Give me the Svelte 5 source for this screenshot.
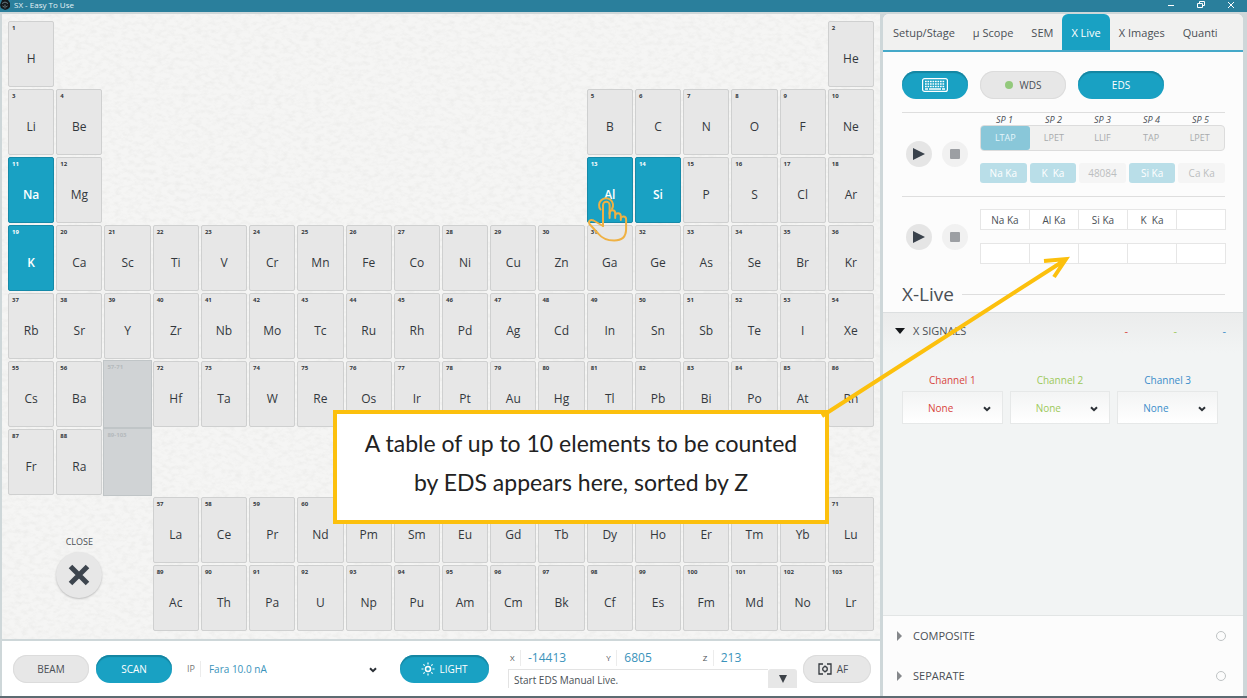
<script>
    // Rows of the periodic table, "." leaves a column empty, "*" is a placeholder
    const layout = [
        { z: [1, 2], cells: "H . . . . . . . . . . . . . . . . He" },
        { z: [3, 5], cells: "Li Be . . . . . . . . . . B C N O F Ne" },
        { z: [11, 13], cells: "Na Mg . . . . . . . . . . Al Si P S Cl Ar" },
        { z: [19], cells: "K Ca Sc Ti V Cr Mn Fe Co Ni Cu Zn Ga Ge As Se Br Kr" },
        { z: [37], cells: "Rb Sr Y Zr Nb Mo Tc Ru Rh Pd Ag Cd In Sn Sb Te I Xe" },
        { z: [55], cells: "Cs Ba * Hf Ta W Re Os Ir Pt Au Hg Tl Pb Bi Po At Rn" },
        { z: [87], cells: "Fr Ra * . . . . . . . . . . . . . . ." },
        { z: [57], cells: ". . . La Ce Pr Nd Pm Sm Eu Gd Tb Dy Ho Er Tm Yb Lu" },
        { z: [89], cells: ". . . Ac Th Pa U Np Pu Am Cm Bk Cf Es Fm Md No Lr" }
    ];

    const placeholders = { 6: "57-71", 7: "89-103" };

    const elements = [];
    layout.forEach((row, r) => {
        let z = row.z[0];
        row.cells.split(" ").forEach((symbol, c) => {
            if (symbol === ".") return;
            if (symbol === "*") {
                elements.push({ symbol: "", z: placeholders[r + 1], row: r + 1, col: c + 1, off: true });
                z = 72;
                return;
            }
            elements.push({ symbol, z, row: r + 1, col: c + 1 });
            z++;
        });
    });

    let selected = $state(["Na", "K", "Al", "Si"]);

    const toggle = (el) => {
        if (el.off) return;
        selected = selected.includes(el.symbol)
            ? selected.filter((s) => s !== el.symbol)
            : [...selected, el.symbol];
    };

    const tabs = ["Setup/Stage", "µ Scope", "SEM", "X Live", "X Images", "Quanti"];
    let activeTab = $state("X Live");

    const crystals = ["LTAP", "LPET", "LLIF", "TAP", "LPET"];
    const lines = [
        { label: "Na Ka", on: true },
        { label: "K  Ka", on: true },
        { label: "48084", on: false },
        { label: "Si Ka", on: true },
        { label: "Ca Ka", on: false }
    ];
    const edsSlots = ["Na Ka", "Al Ka", "Si Ka", "K  Ka", "", "", "", "", "", ""];

    const channels = [
        { id: "ch1", label: "Channel 1", color: "red" },
        { id: "ch2", label: "Channel 2", color: "green" },
        { id: "ch3", label: "Channel 3", color: "blue" }
    ];

    const position = [
        { axis: "X", value: "-14413" },
        { axis: "Y", value: "6805" },
        { axis: "Z", value: "213" }
    ];
</script>

{#snippet chevron()}
    <svg class="chevron" width="8" height="6" viewBox="0 0 8 6"><path d="M1 1.2 4 4.2 7 1.2" fill="none" stroke="#2b3036" stroke-width="2" /></svg>
{/snippet}

{#snippet transport(name)}
    <div class="transport">
        <button class="round play" aria-label="Start {name}">
            <svg width="12" height="12" viewBox="0 0 12 12"><path d="M0 0 12 6 0 12z" fill="#3a424c" /></svg>
        </button>
        <button class="round stop" aria-label="Stop {name}">
            <svg width="10" height="10" viewBox="0 0 10 10"><rect width="10" height="10" rx="1" fill="#9c9fa3" /></svg>
        </button>
    </div>
{/snippet}

<div class="window">
    <header class="titlebar">
        <svg class="app-icon" width="10" height="10" viewBox="0 0 10 10">
            <path d="M2 0h6l2 3v4L8 9 5 10 1 8 0 5z" fill="#14181c" />
            <path d="M2 3.500 5 2l3 1.500M5 4.500v4M2.500 6l1.500 1M7.500 6 6 7" fill="none" stroke="#8fa3ad" stroke-width=".7" />
        </svg>
        <span class="title">SX - Easy To Use</span>
        <div class="window-buttons">
            <button aria-label="Minimize"><svg width="8" height="8" viewBox="0 0 8 8"><path d="M1 4.500h6" /></svg></button>
            <button aria-label="Restore"><svg width="8" height="8" viewBox="0 0 8 8"><path d="M.5 2.500h5v4h-5zM2.500 2.500v-2h5v4h-2" /></svg></button>
            <button aria-label="Close window"><svg width="8" height="8" viewBox="0 0 8 8"><path d="M1 1l6 6M7 1 1 7" /></svg></button>
        </div>
    </header>

    <div class="content">
        <main>
            <section class="board">
                <svg class="texture" aria-hidden="true">
                    <filter id="fur" x="0" y="0" width="100%" height="100%">
                        <feTurbulence type="fractalNoise" baseFrequency="0.15 0.25" numOctaves="3" seed="7" />
                        <feColorMatrix values="0 0 0 0 .6  0 0 0 0 .6  0 0 0 0 .58  1.6 0 0 0 -.65" />
                    </filter>
                    <rect width="100%" height="100%" filter="url(#fur)" />
                </svg>

                <div class="table">
                    {#each elements as el}
                        <button
                            class="element"
                            class:on={selected.includes(el.symbol)}
                            class:off={el.off}
                            style:grid-row={el.row}
                            style:grid-column={el.col}
                            disabled={el.off}
                            onclick={() => toggle(el)}
                        >
                            <span class="number">{el.z}</span>
                            <span class="symbol">{el.symbol}</span>
                        </button>
                    {/each}
                    <div class="close">
                        <label for="close">CLOSE</label>
                        <button id="close">
                            <svg width="22" height="22" viewBox="0 0 22 22"><path d="M2.500 2.500l17 17M19.500 2.500l-17 17" stroke="#3d454e" stroke-width="5" /></svg>
                        </button>
                    </div>
                    <svg class="hand" width="42" height="48" viewBox="0 0 42 48">
                        <g fill="none" stroke="#efb143" stroke-width="2" stroke-linecap="round" stroke-linejoin="round">
                            <path d="M16 31V10a3.300 3.300 0 0 1 6.600 0v13" />
                            <path d="M22.600 19v-1a2.800 2.800 0 0 1 5.600 0v5M28.200 21a2.800 2.800 0 0 1 5.600 0v4M33.800 23.500a2.700 2.700 0 0 1 5.300 .5v10c0 8-5 11.500-12 11.500-8 0-12-2-16-7L2.500 29c-1.500-3 1-5 4-3.500l9.500 5.500" />
                            <path d="M13.500 14.500a7 7 0 1 1 11.500-.5" />
                        </g>
                    </svg>
                </div>
            </section>

            <footer>
                <button class="pill beam">BEAM</button>
                <button class="pill primary scan">SCAN</button>
                <label class="ip" for="ip">IP</label>
                <div class="picker probe">
                    <select id="ip"><option>Fara 10.0 nA</option></select>
                    {@render chevron()}
                </div>
                <button class="pill primary light">
                    <svg width="14" height="14" viewBox="0 0 14 14" fill="none" stroke="#fff">
                        <circle cx="7" cy="7" r="2.500" stroke-width="1.500" />
                        <path d="M7 .5v2M7 11.500v2M.5 7h2M11.500 7h2M2.400 2.400l1.300 1.300M10.300 10.300l1.300 1.300M2.400 11.600l1.300-1.300M10.300 3.700l1.300-1.300" stroke-width="1.200" />
                    </svg>
                    LIGHT
                </button>
                <div class="stage">
                    <div class="position">
                        {#each position as p}
                            <div class="axis"><span>{p.axis}</span><output>{p.value}</output></div>
                        {/each}
                    </div>
                    <div class="status">
                        <input aria-label="Status" value="Start EDS Manual Live." readonly />
                        <button aria-label="Show history"><svg width="8" height="8" viewBox="0 0 8 8"><path d="M0 0h8L4 8z" fill="#3d4248" /></svg></button>
                    </div>
                </div>
                <button class="pill af">
                    <svg width="14" height="12" viewBox="0 0 14 12" fill="none" stroke="#33383e" stroke-width="1.300">
                        <path d="M5 1H1v10h4M9 1h4v10H9" />
                        <circle cx="7" cy="6" r="2.300" />
                        <path d="M7 2.500v1.200M7 8.300v1.200" />
                    </svg>
                    AF
                </button>
            </footer>
        </main>

        <aside>
            <nav>
                {#each tabs as tab}
                    <button class:active={tab === activeTab} onclick={() => (activeTab = tab)}>{tab}</button>
                {/each}
            </nav>

            <section class="controls">
                <div class="modes">
                    <button class="pill primary keyboard" aria-label="Periodic table">
                        <svg width="26" height="14" viewBox="0 0 26 14">
                            <rect x=".6" y=".6" width="24.800" height="12.800" rx="2" fill="none" stroke="#fff" stroke-width="1.200" />
                            <path d="M3 3.500h20M3 6h20M3 8.500h20" stroke="#fff" stroke-width="1.600" stroke-dasharray="1.700 .8" />
                            <path d="M3 11h3M7 11h12M20 11h3" stroke="#fff" stroke-width="1.400" />
                        </svg>
                    </button>
                    <button class="pill"><i class="led"></i>WDS</button>
                    <button class="pill primary">EDS</button>
                </div>

                <div class="spectro wds">
                    {@render transport("WDS")}
                    <div class="slots">
                        <div class="row names">
                            {#each crystals as _, i}<span>SP {i + 1}</span>{/each}
                        </div>
                        <div class="row crystals">
                            {#each crystals as crystal, i}<button class:current={i === 0}>{crystal}</button>{/each}
                        </div>
                        <div class="row lines">
                            {#each lines as line}<button class:lit={line.on}>{line.label}</button>{/each}
                        </div>
                    </div>
                </div>

                <div class="spectro eds">
                    {@render transport("EDS")}
                    <div class="row inputs">
                        {#each edsSlots as slot, i}<input aria-label="EDS element {i + 1}" value={slot} />{/each}
                    </div>
                </div>

                <h1>X-Live</h1>
            </section>

            <section class="signals">
                <button class="fold open">
                    <svg width="10" height="6" viewBox="0 0 10 6"><path d="M0 0h10L5 6z" fill="#15181b" /></svg>
                    <span>X SIGNALS</span>
                    <i class="red">-</i><i class="green">-</i><i class="blue">-</i>
                </button>
                <div class="channels">
                    {#each channels as ch}
                        <div class="channel {ch.color}">
                            <label for={ch.id}>{ch.label}</label>
                            <div class="picker">
                                <select id={ch.id}><option>None</option></select>
                                {@render chevron()}
                            </div>
                        </div>
                    {/each}
                </div>
            </section>

            <section class="folds">
                {#each ["COMPOSITE", "SEPARATE"] as name}
                    <div class="fold">
                        <svg width="5" height="10" viewBox="0 0 5 10"><path d="M0 0v10l5-5z" fill="#85888b" /></svg>
                        <label for={name}>{name}</label>
                        <input type="radio" name="view" id={name} />
                    </div>
                {/each}
            </section>
        </aside>
    </div>

    <div class="callout">
        A table of up to 10 elements to be counted<br />by EDS appears here, sorted by Z
    </div>
    <svg class="arrow" width="256" height="172" viewBox="0 0 256 172">
        <path d="M6 166 249 10M228 11l22-2L238 27" fill="none" stroke="#fcc00d" stroke-width="4" />
    </svg>
</div>

<style>
    :global(body) {
        background: #ced7d9;
    }

    .window {
        position: relative;
        display: flex;
        flex-direction: column;
        min-height: 100vh;
        box-sizing: border-box;
        border-bottom: 2px solid #5d6b72;
        font-family: "Open Sans", "Noto Sans", sans-serif;
        font-size: 11px;
        line-height: 16px;
        color: #4a4f55;
    }

    button,
    input,
    select {
        font: inherit;
        color: inherit;
        margin: 0;
        padding: 0;
        border: 0;
        border-radius: 0;
        box-sizing: border-box;
        min-width: 0;
    }

    .titlebar {
        display: flex;
        align-items: center;
        gap: 4px;
        height: 12px;
        background: #2a7f9c;
        color: #e4f1f5;
        font-size: 8px;
        line-height: 10px;
    }

    .app-icon {
        margin-bottom: 2px;
    }

    .title {
        flex: 1;
        padding-bottom: 2px;
    }

    .window-buttons {
        display: flex;
        gap: 22px;
        padding: 0 12px 3px 0;
    }

    .window-buttons button {
        display: flex;
        background: none;
    }

    .window-buttons path {
        fill: none;
        stroke: #fff;
    }

    .content {
        flex: 1;
        display: grid;
        grid-template-columns: minmax(0, 1fr) 360px;
        gap: 3px;
        padding: 2px 4px 0 2px;
    }

    main {
        display: flex;
        flex-direction: column;
        gap: 2px;
    }

    .board {
        position: relative;
        flex: 1;
        padding: 7px 6px;
        background: #f5f5f4;
    }

    .texture {
        position: absolute;
        inset: 0;
        width: 100%;
        height: 100%;
        opacity: .25;
    }

    .table {
        position: relative;
        display: grid;
        grid-template-columns: repeat(18, minmax(0, 1fr));
        grid-template-rows: repeat(9, 66px);
        gap: 2px;
    }

    .element {
        display: flex;
        flex-direction: column;
        padding: 1px 3px;
        background: #e7e7e7;
        border: 1px solid #cfd0d0;
        border-radius: 2px;
        color: #33383d;
    }

    .number {
        align-self: flex-start;
        font-size: 6px;
        font-weight: bold;
        line-height: 10px;
    }

    .symbol {
        align-self: center;
        padding-top: 18px;
        font-size: 12px;
        line-height: 16px;
    }

    .element.on {
        background: #19a1c3;
        border-color: #1589a8;
        color: #fff;
    }

    .element.on .symbol {
        font-weight: 600;
    }

    .element.off {
        margin: -1px;
        background: #d0d3d5;
        border-color: #c0c5c7;
        border-radius: 0;
        color: #b4b9bc;
    }

    .close {
        grid-area: 8 / 1 / 10 / 4;
        display: flex;
        flex-direction: column;
        align-items: center;
        justify-content: center;
        gap: 2px;
        padding-top: 4px;
        font-size: 9px;
    }

    .close button {
        display: grid;
        place-items: center;
        width: 46px;
        height: 46px;
        border-radius: 50%;
        background: #e7e7e7;
        box-shadow: 0 1px 2px #bbb;
    }

    .hand {
        position: absolute;
        left: 579px;
        top: 174px;
    }

    footer {
        display: flex;
        align-items: center;
        height: 55px;
        padding: 0 9px 0 11px;
        background: #fff;
        box-sizing: border-box;
    }

    .pill {
        display: flex;
        align-items: center;
        justify-content: center;
        width: 86px;
        height: 28px;
        border-radius: 14px;
        background: #e7e7e7;
        box-shadow: inset 0 0 0 1px #dcdcdc;
        font-size: 10px;
    }

    .primary {
        background: #19a1c3;
        box-shadow: inset 0 2px 1px #1585a1;
        color: #fff;
    }

    .beam,
    .scan {
        width: 76px;
        margin-right: 7px;
    }

    .ip {
        padding: 0 5px 0 8px;
        border-right: 1px solid #ececec;
        font-size: 9px;
        color: #777;
    }

    .picker {
        position: relative;
        display: flex;
    }

    .picker select {
        appearance: none;
        width: 100%;
        background: none;
    }

    .chevron {
        position: absolute;
        right: 11px;
        top: 50%;
        margin-top: -2px;
        pointer-events: none;
    }

    .probe {
        flex: 1;
        margin-right: 12px;
    }

    .probe select {
        height: 20px;
        padding-left: 8px;
        font-size: 10px;
        color: #3a93bb;
    }

    .light {
        gap: 4px;
        width: 89px;
        margin-right: 19px;
    }

    .stage {
        width: 289px;
        margin-right: 6px;
    }

    .position {
        display: grid;
        grid-template-columns: repeat(3, 1fr);
    }

    .axis {
        display: flex;
        align-items: center;
        height: 20px;
        padding-bottom: 2px;
        box-sizing: border-box;
    }

    .axis span {
        width: 8px;
        padding: 0 2px;
        font-size: 8px;
        border-right: 1px solid #ececec;
    }

    .axis output {
        padding-left: 7px;
        font-size: 12px;
        color: #3a93bb;
    }

    .status {
        display: flex;
        height: 19px;
    }

    .status input {
        flex: 1;
        padding: 1px 0 0 5px;
        border-top: 1px solid #e3e3e3;
        border-left: 1px solid #e3e3e3;
        font-size: 10px;
    }

    .status button {
        display: grid;
        place-items: center;
        width: 29px;
        background: #e7e7e7;
        border-radius: 3px 3px 0 0;
    }

    .af {
        gap: 5px;
        width: 68px;
        padding-right: 8px;
    }

    aside {
        display: flex;
        flex-direction: column;
        border-radius: 6px 6px 0 0;
        background: #fcfcfc;
        overflow: hidden;
    }

    nav {
        display: flex;
        height: 38px;
        box-sizing: border-box;
        padding-left: 1px;
        background: #f1f1f0;
        border-bottom: 2px solid #45a9c9;
    }

    nav button {
        padding: 2px 9px 0;
        background: none;
        white-space: nowrap;
    }

    nav .active {
        border-radius: 6px 6px 0 0;
        background: #19a1c3;
        color: #fff;
    }

    .controls {
        padding: 19px 18px 5px 19px;
    }

    .modes {
        display: flex;
        gap: 12px;
        padding-bottom: 13px;
    }

    .keyboard {
        width: 66px;
    }

    .led {
        width: 8px;
        height: 8px;
        margin-right: 7px;
        border-radius: 50%;
        background: #93c97c;
    }

    .spectro {
        display: grid;
        grid-template-columns: 66px minmax(0, 1fr);
        align-items: center;
        column-gap: 12px;
        border-top: 1px solid #dedede;
    }

    .wds {
        padding: 2px 0 13px;
    }

    .eds {
        padding: 12px 0 17px;
    }

    .transport {
        display: flex;
        justify-content: space-between;
        padding-left: 4px;
    }

    .wds .transport {
        padding-top: 10px;
    }

    .round {
        display: grid;
        place-items: center;
        width: 26px;
        height: 26px;
        border-radius: 50%;
        background: #e5e5e5;
    }

    .stop {
        background: #f1f1f1;
    }

    .row {
        display: grid;
        grid-template-columns: repeat(5, minmax(0, 1fr));
    }

    .names {
        font-size: 9px;
        font-style: italic;
        line-height: 10px;
        text-align: center;
    }

    .crystals {
        height: 26px;
        box-sizing: border-box;
        border: 1px solid #dcdcdc;
        border-radius: 4px;
        background: #f1f1f0;
        font-size: 9px;
        color: #a8abad;
    }

    .crystals button {
        background: none;
    }

    .crystals .current {
        border-radius: 3px;
        background: #89c7d9;
        color: #e4f5fa;
    }

    .lines {
        gap: 3px;
        padding-top: 12px;
        font-size: 10px;
        color: #bcbec0;
    }

    .lines button {
        height: 20px;
        border-radius: 3px;
        background: #f5f5f5;
        white-space: pre;
    }

    .lines .lit {
        background: #b9dee8;
        color: #fff;
    }

    .inputs {
        row-gap: 13px;
    }

    .inputs input {
        height: 21px;
        margin-right: -1px;
        border: 1px solid #e6e6e6;
        background: #fff;
        font-size: 10px;
        text-align: center;
    }

    h1 {
        display: flex;
        align-items: center;
        gap: 8px;
        margin: 0;
        font-size: 19px;
        font-weight: normal;
        line-height: 26px;
    }

    h1::after {
        content: "";
        flex: 1;
        height: 1px;
        background: #dedede;
    }

    .signals {
        flex: 1;
        border-top: 1px solid #dcdfe0;
        border-bottom: 1px solid #e2e5e5;
        background: linear-gradient(#ebecec, #f2f4f4 40px);
    }

    .fold {
        display: flex;
        align-items: center;
        width: 100%;
        height: 40px;
        box-sizing: border-box;
        padding: 0 17px 0 14px;
        background: none;
        text-align: left;
    }

    .fold span,
    .fold label {
        flex: 1;
        padding-left: 11px;
    }

    .open {
        height: 36px;
        padding-left: 12px;
    }

    .open span {
        padding-left: 8px;
    }

    .open i {
        width: 49px;
        text-align: right;
        font-style: normal;
    }

    .channels {
        display: grid;
        grid-template-columns: repeat(3, minmax(0, 1fr));
        gap: 7px;
        padding: 23px 25px 0 19px;
    }

    .channel label {
        display: block;
        padding-bottom: 3px;
        text-align: center;
        font-size: 10px;
    }

    .channel .picker {
        height: 33px;
        border: 1px solid #e6e8e8;
        background: linear-gradient(#f3f4f4, #fff);
        box-sizing: border-box;
    }

    .channel select {
        padding-left: 25px;
        font-size: 10px;
    }

    .red {
        color: #d8453c;
    }

    .green {
        color: #9dc95a;
    }

    .blue {
        color: #3a8dca;
    }

    .folds input {
        appearance: none;
        width: 10px;
        height: 10px;
        border: 1px solid #bfc3c4;
        border-radius: 50%;
    }

    .callout {
        position: absolute;
        left: 333px;
        top: 410px;
        width: 496px;
        height: 114px;
        padding-top: 10px;
        box-sizing: border-box;
        border: 4px solid #fcc00d;
        background: #fff;
        color: #222;
        font-family: Lato, sans-serif;
        font-size: 23px;
        line-height: 39px;
        text-align: center;
    }

    .arrow {
        position: absolute;
        left: 816px;
        top: 250px;
    }
</style>
